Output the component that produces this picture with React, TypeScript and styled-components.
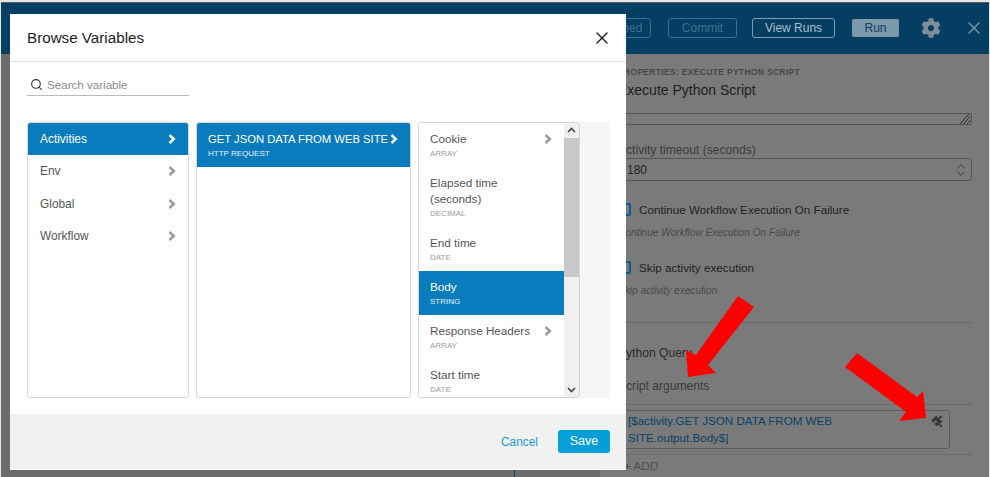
import React from 'react';
import styled, { createGlobalStyle } from 'styled-components';
import { FaCog, FaPuzzlePiece } from 'react-icons/fa';
import { ChevronsUpDown, Search, X } from 'lucide-react';

const GlobalStyle = createGlobalStyle`
  html, body { margin: 0; padding: 0; background: #e8e8e8; }
  * { box-sizing: border-box; }
`;

const Page = styled.div`
  position: relative;
  width: 990px;
  height: 477px;
  overflow: hidden;
  display: flex;
  flex-direction: column;
  padding: 2px 1px 0 1px;
  font-family: 'Liberation Sans', Arial, sans-serif;
  background: #e6e6e6;
`;

const TopBar = styled.header`
  height: 52px;
  flex: none;
  display: flex;
  align-items: center;
  justify-content: flex-end;
  border-top: 1px solid #5c5c5c;
  background: #043e62;
  padding: 0 5px 2px 0;
`;

const BarButton = styled.div<{ $w: number; $dim?: boolean; $ml: number }>`
  width: ${(p) => p.$w}px;
  margin-left: ${(p) => p.$ml}px;
  height: 20px;
  border: 1px solid ${(p) => (p.$dim ? '#3a6f8e' : '#7d9db2')};
  border-radius: 3px;
  color: ${(p) => (p.$dim ? '#3f7292' : '#a9bfcd')};
  font-size: 12px;
  line-height: 18px;
  text-align: center;
`;

const RunButton = styled.div`
  width: 47px;
  height: 18px;
  margin-left: 17px;
  background: #7c98ab;
  border-radius: 2px;
  color: #0d4263;
  font-size: 12px;
  line-height: 18px;
  text-align: center;
`;

const GearIcon = styled(FaCog)`
  width: 20px;
  height: 20px;
  margin-left: 22px;
  color: #7d8f9b;
`;

const CloseBar = styled(X)`
  width: 20px;
  height: 20px;
  margin-left: 23px;
  color: #6f8ea2;
`;

const Body = styled.div`
  flex: 1;
  display: flex;
  min-height: 0;
`;

const Canvas = styled.div`
  width: 599px;
  flex: none;
  background: #6d6d6d;
  position: relative;
`;

const CanvasLink = styled.div`
  position: absolute;
  left: 513px;
  bottom: 0;
  width: 1px;
  height: 10px;
  background: #0a4a6e;
`;

const PropsPanel = styled.aside`
  flex: 1;
  min-width: 0;
  display: flex;
  flex-direction: column;
  background: #7a7a7a;
  padding-left: 18px;
  padding-right: 17px;
  color: #2c2c2c;
`;

const Kicker = styled.div`
  margin-top: 13px;
  font-size: 8.5px;
  line-height: 10px;
  font-weight: 700;
  letter-spacing: 0.32px;
  color: #474747;
  white-space: nowrap;
`;

const PanelTitle = styled.div`
  margin-top: 4px;
  font-size: 14px;
  line-height: 18px;
  color: #202020;
`;

const TextareaStub = styled.div`
  position: relative;
  margin-top: 14px;
  height: 12px;
  border: 1px solid #565656;
  border-left: none;
  border-radius: 0 0 2px 0;
`;

const ResizeGrip = styled.svg`
  position: absolute;
  right: 0;
  bottom: 0;
  width: 14px;
  height: 11px;
`;

const FieldLabel = styled.div<{ $mt: number; $dark?: boolean }>`
  margin-top: ${(p) => p.$mt}px;
  font-size: 12.1px;
  line-height: 16px;
  color: ${(p) => (p.$dark ? '#2a2a2a' : '#3a3a3a')};
  white-space: nowrap;
`;

const SelectBox = styled.div`
  height: 23px;
  border: 1px solid #565656;
  border-radius: 3px;
  display: flex;
  align-items: center;
  justify-content: space-between;
  padding: 0 2px 0 8px;
  font-size: 12px;
  color: #222;
`;

const CheckRow = styled.div<{ $mt: number }>`
  margin-top: ${(p) => p.$mt}px;
  height: 16px;
  display: flex;
  align-items: center;
  gap: 8px;
  font-size: 11.7px;
  color: #222;
  white-space: nowrap;
`;

const CheckBox = styled.span`
  width: 13px;
  height: 13px;
  flex: none;
  border: 2px solid #0a5f8e;
  border-radius: 2px;
`;

const HelpText = styled.div`
  margin-top: 9px;
  font-size: 10.1px;
  line-height: 14px;
  font-style: italic;
  color: #4a4a4a;
  white-space: nowrap;
`;

const Rule = styled.div<{ $mt: number }>`
  margin-top: ${(p) => p.$mt}px;
  height: 1px;
  background: #6c6c6c;
`;

const ArgField = styled.div`
  position: relative;
  margin-top: 5px;
  height: 39px;
  width: 332px;
  border: 1px solid #5c5c5c;
  border-radius: 3px;
  padding: 1px 40px 0 9px;
  font-size: 11.6px;
  line-height: 17px;
  color: #0b4265;
`;

const PuzzleIcon = styled(FaPuzzlePiece)`
  position: absolute;
  top: 4px;
  right: 4px;
  width: 12px;
  height: 12px;
  color: #383838;
  transform: rotate(45deg);
`;

const AddLink = styled.div`
  margin-top: 3px;
  margin-left: 6px;
  font-size: 11.7px;
  line-height: 16px;
  color: #505050;
`;

const Modal = styled.section`
  position: absolute;
  left: 10px;
  top: 14px;
  width: 616px;
  height: 456px;
  display: flex;
  flex-direction: column;
  background: #fff;
  border-bottom: 1px solid #fff;
`;

const ModalHeader = styled.div`
  height: 48px;
  flex: none;
  display: flex;
  align-items: center;
  justify-content: space-between;
  padding: 0 14px 0 17px;
  border-bottom: 1px solid #dfdfdf;
  font-size: 15.2px;
  color: #1d1d1d;
`;

const CloseModal = styled(X)`
  width: 20px;
  height: 20px;
  color: #222;
  stroke-width: 1.7;
`;

const ModalBody = styled.div`
  flex: 1;
  padding: 12px 16px 16px 17px;
  display: flex;
  flex-direction: column;
  min-height: 0;
`;

const SearchBox = styled.div`
  width: 162px;
  height: 22px;
  display: flex;
  align-items: center;
  gap: 4px;
  padding-left: 3px;
  border-bottom: 1px solid #b9b9b9;
  font-size: 11.6px;
  color: #8a8a8a;
`;

const SearchIcon = styled(Search)`
  width: 13px;
  height: 13px;
  color: #333;
`;

const Columns = styled.div`
  margin-top: 26px;
  height: 276px;
  display: flex;
  gap: 7px;
  background: linear-gradient(to right, transparent 553px, #f6f6f6 553px);
`;

const Column = styled.div<{ $w: number }>`
  position: relative;
  width: ${(p) => p.$w}px;
  flex: none;
  overflow: hidden;
  background: #fff;
  border: 1px solid #d6d6d6;
  border-radius: 3px;
`;

const NavRow = styled.div<{ $active?: boolean }>`
  height: ${(p) => (p.$active ? 32 : 32.5)}px;
  padding: 0 12px;
  display: flex;
  align-items: center;
  justify-content: space-between;
  font-size: 11.9px;
  background: ${(p) => (p.$active ? '#0a7bbc' : 'transparent')};
  color: ${(p) => (p.$active ? '#fff' : '#555')};
`;

const VarRow = styled.div<{ $active?: boolean; $tall?: boolean }>`
  height: ${(p) => (p.$tall ? 60 : 44)}px;
  padding: 8px 12px 0 11px;
  display: flex;
  justify-content: space-between;
  background: ${(p) => (p.$active ? '#0a7bbc' : 'transparent')};
  color: ${(p) => (p.$active ? '#fff' : '#555')};
`;

const SourceRow = styled(VarRow)`
  justify-content: flex-start;
  gap: 2px;
`;

const VarName = styled.div`
  font-size: 11.7px;
  line-height: 16px;
  white-space: nowrap;
`;

const SourceName = styled(VarName)`
  font-size: 11.25px;
`;

const VarType = styled.div<{ $active?: boolean }>`
  margin-top: 1px;
  font-size: 8px;
  line-height: 12px;
  color: ${(p) => (p.$active ? '#e6f2f9' : '#9d9d9d')};
`;

const ChevronSvg = styled.svg<{ $active?: boolean }>`
  width: 8px;
  height: 10px;
  flex: none;
  fill: none;
  stroke: ${(p) => (p.$active ? '#fff' : '#9a9a9a')};
  stroke-width: 2.4;
`;

const Chevron = ({ active, mt }: { active?: boolean; mt?: number }) => (
  <ChevronSvg $active={active} viewBox="0 0 8 10" style={mt ? { marginTop: mt } : undefined}>
    <polyline points="1.5,1 5.8,5 1.5,9" />
  </ChevronSvg>
);

const VarList = styled.div`
  width: 145px;
`;

const ScrollTrack = styled.div`
  position: absolute;
  top: 0;
  right: 0;
  bottom: 0;
  width: 15px;
  background: #f0f0f0;
  display: flex;
  flex-direction: column;
  align-items: center;
  justify-content: space-between;
`;

const ScrollThumb = styled.div`
  position: absolute;
  top: 15px;
  left: 0;
  width: 15px;
  height: 139px;
  background: #c8c8c8;
`;

const ScrollArrow = styled.svg`
  width: 15px;
  height: 15px;
  fill: none;
  stroke: #444;
  stroke-width: 1.6;
`;

const ModalFooter = styled.div`
  height: 55px;
  flex: none;
  display: flex;
  align-items: center;
  justify-content: flex-end;
  gap: 20px;
  padding: 0 16px 0 0;
  background: #f1f1f1;
`;

const CancelLink = styled.span`
  font-size: 11.9px;
  color: #1b9bd5;
`;

const SaveButton = styled.div`
  width: 52px;
  height: 23px;
  border-radius: 3px;
  background: #049fd9;
  color: #fff;
  font-size: 12.5px;
  line-height: 23px;
  text-align: center;
`;

const ArrowLayer = styled.svg`
  position: absolute;
  left: 0;
  top: 0;
  width: 990px;
  height: 477px;
  pointer-events: none;
`;

const activities = ['Env', 'Global', 'Workflow'];

const App = () => (
  <Page>
    <GlobalStyle />
    <TopBar>
      <BarButton $w={70} $ml={0} $dim>Published</BarButton>
      <BarButton $w={69} $ml={17} $dim>Commit</BarButton>
      <BarButton $w={83} $ml={15}>View Runs</BarButton>
      <RunButton>Run</RunButton>
      <GearIcon />
      <CloseBar />
    </TopBar>
    <Body>
      <Canvas>
        <CanvasLink />
      </Canvas>
      <PropsPanel>
        <Kicker>PROPERTIES: EXECUTE PYTHON SCRIPT</Kicker>
        <PanelTitle>Execute Python Script</PanelTitle>
        <TextareaStub>
          <ResizeGrip viewBox="0 0 14 11">
            <path d="M3 11 L12 1 M6.5 11 L13 3.5 M10 11 L14 6.5" stroke="#2e2e2e" strokeWidth="1" fill="none" />
          </ResizeGrip>
        </TextareaStub>
        <FieldLabel $mt={17}>Activity timeout (seconds)</FieldLabel>
        <SelectBox>
          180
          <ChevronsUpDown size={16} color="#333" strokeWidth={1.3} />
        </SelectBox>
        <CheckRow $mt={20}><CheckBox />Continue Workflow Execution On Failure</CheckRow>
        <HelpText>Continue Workflow Execution On Failure</HelpText>
        <CheckRow $mt={19}><CheckBox />Skip activity execution</CheckRow>
        <HelpText>Skip activity execution</HelpText>
        <Rule $mt={24} />
        <FieldLabel $mt={22} $dark>Python Query</FieldLabel>
        <FieldLabel $mt={17}>Script arguments</FieldLabel>
        <Rule $mt={10} />
        <ArgField>
          [$activity.GET JSON DATA FROM WEB SITE.output.Body$]
          <PuzzleIcon />
        </ArgField>
        <Rule $mt={5} />
        <AddLink>+ ADD</AddLink>
      </PropsPanel>
    </Body>

    <Modal>
      <ModalHeader>
        Browse Variables
        <CloseModal />
      </ModalHeader>
      <ModalBody>
        <SearchBox>
          <SearchIcon />
          Search variable
        </SearchBox>
        <Columns>
          <Column $w={162}>
            <NavRow $active>Activities<Chevron active /></NavRow>
            {activities.map((name) => (
              <NavRow key={name}>{name}<Chevron /></NavRow>
            ))}
          </Column>
          <Column $w={215}>
            <SourceRow $active>
              <div>
                <SourceName>GET JSON DATA FROM WEB SITE</SourceName>
                <VarType $active>HTTP REQUEST</VarType>
              </div>
              <Chevron active mt={3} />
            </SourceRow>
          </Column>
          <Column $w={162}>
            <VarList>
              <VarRow>
                <div><VarName>Cookie</VarName><VarType>ARRAY</VarType></div>
                <Chevron mt={3} />
              </VarRow>
              <VarRow $tall>
                <div><VarName>Elapsed time<br />(seconds)</VarName><VarType>DECIMAL</VarType></div>
              </VarRow>
              <VarRow>
                <div><VarName>End time</VarName><VarType>DATE</VarType></div>
              </VarRow>
              <VarRow $active>
                <div><VarName>Body</VarName><VarType $active>STRING</VarType></div>
              </VarRow>
              <VarRow>
                <div><VarName>Response Headers</VarName><VarType>ARRAY</VarType></div>
                <Chevron mt={3} />
              </VarRow>
              <VarRow>
                <div><VarName>Start time</VarName><VarType>DATE</VarType></div>
              </VarRow>
            </VarList>
            <ScrollTrack>
              <ScrollThumb />
              <ScrollArrow viewBox="0 0 15 15"><polyline points="4,9 7.5,5.5 11,9" /></ScrollArrow>
              <ScrollArrow viewBox="0 0 15 15"><polyline points="4,6 7.5,9.5 11,6" /></ScrollArrow>
            </ScrollTrack>
          </Column>
        </Columns>
      </ModalBody>
      <ModalFooter>
        <CancelLink>Cancel</CancelLink>
        <SaveButton>Save</SaveButton>
      </ModalFooter>
    </Modal>

    <ArrowLayer viewBox="0 0 990 477">
      <polygon fill="#ff0000" points="738,296 754,307 708,365 716,373 688,377 686,350 696,355" />
      <polygon fill="#ff0000" points="857,353 845,367 906,412 899,421 926,418 923,391 917,397" />
    </ArrowLayer>
  </Page>
);

export default App;
